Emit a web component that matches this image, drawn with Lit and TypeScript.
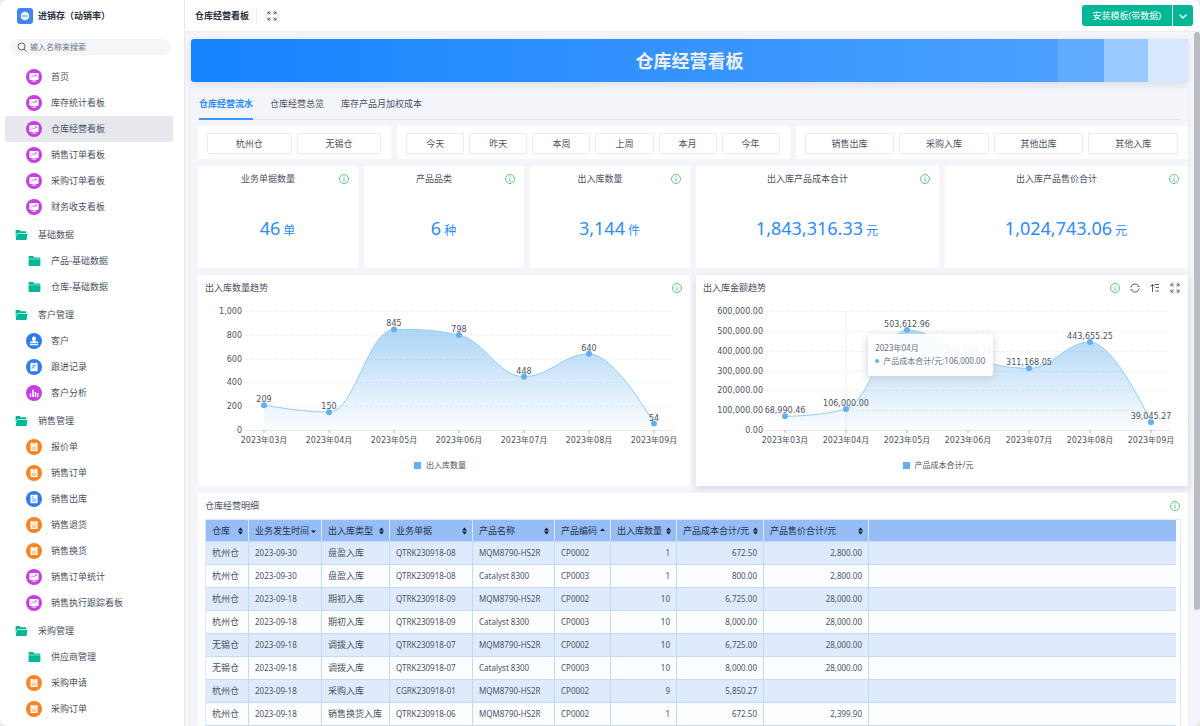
import { LitElement, html, svg, css, nothing } from "lit";
import { customElement, property } from "lit/decorators.js";
import { classMap } from "lit/directives/class-map.js";

type IconName =
  | "board" | "person" | "note" | "bars" | "form" | "doc" | "open" | "folder";

interface NavItem { label: string; icon: IconName; active?: boolean; }
interface NavGroup { label?: string; items: NavItem[]; }

const NAV: NavGroup[] = [
  {
    items: [
      { label: "首页", icon: "board" },
      { label: "库存统计看板", icon: "board" },
      { label: "仓库经营看板", icon: "board", active: true },
      { label: "销售订单看板", icon: "board" },
      { label: "采购订单看板", icon: "board" },
      { label: "财务收支看板", icon: "board" },
    ],
  },
  {
    label: "基础数据",
    items: [
      { label: "产品-基础数据", icon: "folder" },
      { label: "仓库-基础数据", icon: "folder" },
    ],
  },
  {
    label: "客户管理",
    items: [
      { label: "客户", icon: "person" },
      { label: "跟进记录", icon: "note" },
      { label: "客户分析", icon: "bars" },
    ],
  },
  {
    label: "销售管理",
    items: [
      { label: "报价单", icon: "form" },
      { label: "销售订单", icon: "form" },
      { label: "销售出库", icon: "doc" },
      { label: "销售退货", icon: "form" },
      { label: "销售换货", icon: "form" },
      { label: "销售订单统计", icon: "board" },
      { label: "销售执行跟踪看板", icon: "board" },
    ],
  },
  {
    label: "采购管理",
    items: [
      { label: "供应商管理", icon: "folder" },
      { label: "采购申请", icon: "form" },
      { label: "采购订单", icon: "form" },
    ],
  },
];

const FILTERS = [
  ["杭州仓", "无锡仓"],
  ["今天", "昨天", "本周", "上周", "本月", "今年"],
  ["销售出库", "采购入库", "其他出库", "其他入库"],
];

const KPIS = [
  [
    { title: "业务单据数量", value: "46", unit: "单" },
    { title: "产品品类", value: "6", unit: "种" },
    { title: "出入库数量", value: "3,144", unit: "件" },
  ],
  [
    { title: "出入库产品成本合计", value: "1,843,316.33", unit: "元" },
    { title: "出入库产品售价合计", value: "1,024,743.06", unit: "元" },
  ],
];

const COLUMNS = [
  { label: "仓库", sort: "both", cls: "c-house" },
  { label: "业务发生时间", sort: "down", cls: "c-date" },
  { label: "出入库类型", sort: "both", cls: "c-type" },
  { label: "业务单据", sort: "both", cls: "c-bill" },
  { label: "产品名称", sort: "both", cls: "c-name" },
  { label: "产品编码", sort: "up", cls: "c-code" },
  { label: "出入库数量", sort: "both", cls: "c-qty" },
  { label: "产品成本合计/元", sort: "both", cls: "c-cost" },
  { label: "产品售价合计/元", sort: "both", cls: "c-price" },
];

const ROWS = [
  ["杭州仓", "2023-09-30", "盘盈入库", "QTRK230918-08", "MQM8790-HS2R", "CP0002", "1", "672.50", "2,800.00"],
  ["杭州仓", "2023-09-30", "盘盈入库", "QTRK230918-08", "Catalyst 8300", "CP0003", "1", "800.00", "2,800.00"],
  ["杭州仓", "2023-09-18", "期初入库", "QTRK230918-09", "MQM8790-HS2R", "CP0002", "10", "6,725.00", "28,000.00"],
  ["杭州仓", "2023-09-18", "期初入库", "QTRK230918-09", "Catalyst 8300", "CP0003", "10", "8,000.00", "28,000.00"],
  ["无锡仓", "2023-09-18", "调拨入库", "QTRK230918-07", "MQM8790-HS2R", "CP0002", "10", "6,725.00", "28,000.00"],
  ["无锡仓", "2023-09-18", "调拨入库", "QTRK230918-07", "Catalyst 8300", "CP0003", "10", "8,000.00", "28,000.00"],
  ["杭州仓", "2023-09-18", "采购入库", "CGRK230918-01", "MQM8790-HS2R", "CP0002", "9", "5,850.27", ""],
  ["杭州仓", "2023-09-18", "销售换货入库", "QTRK230918-06", "MQM8790-HS2R", "CP0002", "1", "672.50", "2,399.90"],
];

const MONTHS = ["2023年03月", "2023年04月", "2023年05月", "2023年06月", "2023年07月", "2023年08月", "2023年09月"];

const disc = (fill: string, body: unknown) => html`<svg class="disc" viewBox="0 0 16 16" aria-hidden="true">
  <circle cx="8" cy="8" r="8" fill=${fill}></circle>${body}</svg>`;

function navIcon(name: IconName) {
  switch (name) {
    case "board":
      return disc("#c63fe0", svg`<path fill="#fff" d="M4.3 3.9h7.4a.9.9 0 0 1 .9.9v5.2a.9.9 0 0 1-.9.9H8.6v.8h2v.8H5.4v-.8h2v-.8H4.3a.9.9 0 0 1-.9-.9V4.800a.9.9 0 0 1 .9-.9z"/><path d="M5.300 8.300l1.500-1.400 1.300.9 2-1.900M8.800 5.700h1.500v1.400" fill="none" stroke="#c63fe0" stroke-width=".7"/>`);
    case "person":
      return disc("#2f7cee", svg`<path fill="#fff" d="M8 3.500a2.100 2.100 0 0 1 1.300 3.700v1.200h1.900a.9.9 0 0 1 .9.900v1H3.900v-1a.9.9 0 0 1 .9-.9h1.900V7.200A2.100 2.100 0 0 1 8 3.500zM3.900 11.100h8.200v1.100H3.900z"/>`);
    case "note":
      return disc("#2f7cee", svg`<path fill="#fff" d="M4.400 4.200h1V3.500h1.200v.7h2.800v-.7h1.200v.7h1v8H4.400z"/><path d="M5.900 6.800h4.200M5.900 8.800h2.600" stroke="#2f7cee" stroke-width=".9"/>`);
    case "bars":
      return disc("#c63fe0", svg`<path d="M4.500 12V8.500M7 12V4.700M9.400 12V7M11.700 12V8.200" stroke="#fff" stroke-width="1.500"/>`);
    case "form":
      return disc("#fb8420", svg`<path fill="#fff" d="M4.500 3.900h7v8.200h-7z"/><path d="M6.600 4.800h2.800M8 6.200v3.300M6.500 8.100v1.700M9.500 8.100v1.700M5.900 10.300h4.200" stroke="#fb8420" stroke-width=".6"/>`);
    case "doc":
      return disc("#2f7cee", svg`<path fill="#fff" d="M4.400 3.800h7.200v8.400H4.400z"/><path d="M5.800 5.900h2M5.800 8h4.400M5.800 10h4.400" stroke="#2f7cee" stroke-width=".7"/>`);
    case "folder":
      return html`<svg class="folder sub" viewBox="0 0 13 11" aria-hidden="true"><path fill="#02b795" d="M0 .9Q0 0 .9 0h4l1.500 1.600h5.700q.9 0 .9.900V3H0zM0 3.600h13V10q0 1-.9 1H.9Q0 11 0 10z"/></svg>`;
    default:
      return html`<svg class="folder" viewBox="0 0 13 11" aria-hidden="true"><path fill="#02b795" d="M0 .9Q0 0 .9 0h3.600l1.300 1.500h5q.9 0 .9.900v.9H2.400L.5 5.300 0 7z"/><path fill="#02b795" d="M2.600 4.100H13l-.8 6q-.1.900-1 .900H1Q0 11 .2 10l.9-4.700Q1.400 4.100 2.600 4.100z"/></svg>`;
  }
}

const infoIcon = html`<svg class="ic info" viewBox="0 0 12 12" role="img" aria-label="说明">
  <circle cx="6" cy="6" r="4.500" fill="none" stroke="#58cb7a" stroke-width="1"></circle>
  <path d="M6 3.300v1.100M6 5.200v3.600" stroke="#58cb7a" stroke-width="1"></path></svg>`;

const expandIcon = html`<svg class="ic" viewBox="0 0 12 12" aria-hidden="true">
  <path d="M2 4.500V2h2.500M7.500 2H10v2.500M10 7.500V10H7.500M4.500 10H2V7.500M2.200 2.200l2.300 2.300M9.800 2.200L7.500 4.500M9.800 9.800L7.500 7.500M2.200 9.800l2.300-2.300" fill="none" stroke="#565e6c" stroke-width="1"></path></svg>`;

/** Area chart with a smoothed line on a 492 x 150 canvas. */
@customElement("trend-chart")
export class TrendChart extends LitElement {
  @property({ attribute: false }) values: number[] = [];
  @property({ attribute: false }) ticks: number[] = [];
  @property({ type: Number }) decimals = 0;
  @property({ type: Number }) left = 47;
  @property({ type: Number }) first = 66;
  @property({ type: Number }) step = 65;
  @property({ type: Number }) pointer = -1;

  static styles = css`
    :host { display: block; }
    svg { display: block; width: 100%; overflow: visible; }
    text { font: 8px "DejaVu Sans", "Noto Sans CJK SC", sans-serif; fill: #4b5363; }
    .end { text-anchor: end; }
    .mid { text-anchor: middle; }
    .grid { stroke: #f0f1f4; stroke-dasharray: 3 2; }
    .axis { stroke: #e4e6ea; }
    .pointer { stroke: #eceef1; }
    .tick { stroke: #a9afb9; }
    .line { fill: none; stroke: #93cbf5; stroke-width: 1; }
    .dot { fill: #63b0ee; }
  `;

  private fmt(n: number) {
    return n.toLocaleString("en-US", {
      minimumFractionDigits: this.decimals,
      maximumFractionDigits: this.decimals,
    });
  }

  /** Cubic path whose handles never overshoot the neighbouring values. */
  private curve(p: number[][]) {
    const clamp = (v: number, a: number, b: number) =>
      Math.min(Math.max(v, Math.min(a, b)), Math.max(a, b));
    const reach = 0.4;
    let [cx, cy] = p[0];
    let d = `M${p[0][0]} ${p[0][1]}`;
    for (let i = 1; i < p.length; i++) {
      const [x, y] = p[i];
      let bx = x, by = y, nx = x, ny = y;
      if (i < p.length - 1) {
        const py = p[i - 1][1];
        const [qx, qy] = p[i + 1];
        const rise = (qy - py) / 2;
        ny = clamp(y + rise * reach, qy, y);
        by = clamp(2 * y - ny, py, y);
        ny = 2 * y - by;
        nx = x + (qx - x) * reach;
        bx = 2 * x - nx;
      }
      d += `C${cx} ${cy} ${bx} ${by} ${x} ${y}`;
      cx = nx;
      cy = ny;
    }
    return d;
  }

  render() {
    const top = 12, base = 131, right = 475;
    const max = this.ticks[this.ticks.length - 1] || 1;
    const y = (v: number) => base - ((base - top) * v) / max;
    const pts = this.values.map((v, i) => [this.first + this.step * i, y(v)]);
    if (!pts.length) return nothing;
    const d = this.curve(pts);
    const lastX = pts[pts.length - 1][0];
    return html`<svg viewBox="0 0 492 150" role="img">
      <defs><linearGradient id="fade" x1="0" y1="0" x2="0" y2="1">
        <stop offset="0" stop-color="#63b0ee" stop-opacity=".52"></stop>
        <stop offset="1" stop-color="#63b0ee" stop-opacity=".02"></stop>
      </linearGradient></defs>
      ${this.ticks.map((t) => svg`
        <line class=${t ? "grid" : "axis"} x1=${this.left} x2=${right} y1=${Math.round(y(t)) + 0.5} y2=${Math.round(y(t)) + 0.5} />
        <text class="end" x=${this.left - 3} y=${y(t) + 3}>${this.fmt(t)}</text>`)}
      ${this.pointer >= 0 ? svg`<line class="pointer" x1=${pts[this.pointer][0]} x2=${pts[this.pointer][0]} y1=${top} y2=${base} />` : nothing}
      <path d="${d}L${lastX} ${base}L${this.first} ${base}Z" fill="url(#fade)"></path>
      <path class="line" d=${d}></path>
      ${pts.map(([px, py], i) => svg`
        <line class="tick" x1=${px} x2=${px} y1=${base} y2=${base + 3} />
        <text class="mid" x=${px} y=${base + 13}>${MONTHS[i]}</text>
        <circle class="dot" cx=${px} cy=${py} r="3" />
        <text class="mid" x=${px} y=${py - 3}>${this.fmt(this.values[i])}</text>`)}
    </svg>`;
  }
}

@customElement("app-root")
export class AppRoot extends LitElement {
  static styles = css`
    :host {
      display: block;
      height: 100vh;
      overflow: hidden;
      background: #e9eaec;
      font: 9px/14px "Noto Sans", "Noto Sans CJK SC", sans-serif;
      color: #4b5363;
    }
    * { box-sizing: border-box; }
    ul { list-style: none; margin: 0; padding: 0; }
    h1, h2, h3, p { margin: 0; font-size: 9px; font-weight: 400; }
    a { color: inherit; text-decoration: none; }
    button { font: inherit; color: inherit; cursor: pointer; padding: 0; }
    .ic { display: block; width: 12px; height: 12px; flex: none; }

    .window { display: flex; height: 100%; border-radius: 8px; overflow: hidden; background: #f4f5fa; }

    .side { width: 185px; flex: none; background: #fff; border-right: 1px solid #e6e8ee; overflow: hidden; }
    .brand { display: flex; align-items: center; gap: 5px; height: 32px; padding-left: 17px; }
    .brand h1 { font-weight: 700; color: #2a3140; }
    .logo { width: 16px; height: 16px; display: block; }
    .search { display: flex; align-items: center; gap: 2px; height: 16px; margin: 7px 13px 9px 10px; padding-left: 6px; border-radius: 8px; background: #f4f6f9; }
    .search input { flex: 1; min-width: 0; border: 0; padding: 0; background: none; outline: none; font: inherit; font-size: 8px; color: inherit; }
    .search input::placeholder { color: #6b7280; opacity: 1; }
    .groups { display: flex; flex-direction: column; gap: 2px; }
    .entry { display: flex; align-items: center; height: 26px; margin: 0 11px 0 5px; border-radius: 2px; padding-left: 10px; gap: 10px; color: #4b5363; }
    .groups ul { display: block; }
    .entry.child { padding-left: 21px; gap: 9px; }
    .entry.active { background: #e6e8ed; }
    .disc { width: 16px; height: 16px; flex: none; }
    .folder { width: 13px; height: 10px; flex: none; }
    .folder.sub { margin: 0 1px 0 2px; }

    .main { flex: 1; min-width: 0; display: flex; flex-direction: column; }
    .top { display: flex; align-items: center; height: 32px; flex: none; padding: 0 7px 0 10px; background: #fff; border-bottom: 1px solid #eceef3; }
    .top h2 { font-weight: 700; color: #2a3140; padding-right: 7px; margin-right: 9px; border-right: 1px solid #e8eaee; }
    .top .plain { border: 0; background: none; }
    .install { display: flex; gap: 1px; margin-left: auto; }
    .install button { height: 21px; border: 0; background: #02b795; color: #fff; display: grid; place-items: center; }
    .install .go { padding: 0 11px; border-radius: 3px 0 0 3px; }
    .install .more { width: 20px; border-radius: 0 3px 3px 0; }

    .scroll { flex: 1; min-height: 0; display: flex; overflow: hidden; }
    .page { flex: 1; min-width: 0; padding: 7px 6px 0; }
    .thumb { width: 6px; height: 578px; flex: none; border-radius: 3px; background: #b9bdc3; }
    .banner { display: grid; grid-template-columns: 1fr 46px 44px 40px; height: 43px; border-radius: 3px; overflow: hidden; background: linear-gradient(90deg, #1683ff, #53a4ff); box-shadow: 0 2px 6px #d8dcec; }
    .banner h2 { grid-row: 1; grid-column: 1 / -1; place-self: center; font-size: 18px; line-height: 26px; font-weight: 700; color: #eceef2; }
    .shade { grid-row: 1; }
    .s1 { grid-column: 2; background: #61abff; }
    .s2 { grid-column: 3; background: #99caff; }
    .s3 { grid-column: 4; background: #d8e9ff; }
    .panel { margin-top: 6px; padding: 0 0 0 7px; box-shadow: 0 0 5px #e6e8f1; }
    .tabs { display: flex; gap: 17px; margin: 0 8px 6px 1px; border-bottom: 1px solid #e3e5ea; }
    .tabs a { height: 32px; padding-top: 9px; margin-bottom: -1px; }
    .tabs a.on { color: #2a8cff; font-weight: 700; border-bottom: 2px solid #3d96ff; }
    .stack { display: grid; gap: 7px; }
    .filters { display: grid; grid-template-columns: 33fr 67fr 67fr; gap: 6px; }
    .filter { display: flex; gap: 5px; background: #fff; padding: 7px 10px 5px 9px; }
    .filter button { flex: 1; height: 21px; border: 1px solid #e9ebee; border-radius: 2px; background: #fff; }
    .halves { display: grid; grid-template-columns: 1fr 1fr; gap: 6px; }
    .kpis { display: grid; grid-auto-flow: column; grid-auto-columns: 1fr; gap: 6px; }
    .kpi { height: 102px; background: #fff; padding: 6px 8px 6px 7px; text-align: center; }
    .kpi header { display: grid; grid-template-columns: 1fr 12px; gap: 7px; align-items: center; }
    .kpi p { margin-top: 28px; font-size: 12px; line-height: 28px; color: #2a8cff; }
    .kpi .num { font-size: 18px; font-weight: 400; }
    .card { background: #fff; padding: 6px 7px 14px; position: relative; }
    .card.raised { box-shadow: 0 3px 8px #d6d8e6; }
    .card header { display: flex; align-items: center; gap: 8px; }
    .card header h3 { margin-right: auto; }
    .card header .plain { border: 0; background: none; }
    .card trend-chart { margin: 4px -7px 0; }
    .legend { display: flex; justify-content: center; align-items: center; gap: 5px; font-size: 8px; margin-top: 9px; padding-right: 8px; }
    .swatch { width: 7px; height: 7px; background: #63b0ee; }
    .tip { position: absolute; left: 35%; top: 59px; width: 125px; height: 42px; padding: 7px 7px 0; border-radius: 2px; background: rgba(255, 255, 255, 0.93); box-shadow: 0 2px 8px #c9ccd6; font-size: 8px; line-height: 13px; color: #6b7280; white-space: nowrap; }
    .tip p { font-size: 8px; display: flex; align-items: center; gap: 4px; }
    .tip i { width: 4px; height: 4px; border-radius: 50%; background: #63b0ee; }

    .detail { padding-bottom: 0; }
    .sheet { margin-top: 6px; border: 1px solid #deebff; border-bottom: 0; padding-right: 4px; }
    table { width: 100%; table-layout: fixed; border-collapse: separate; border-spacing: 0; }
    th, td { height: 23px; padding: 0 6px; border-right: 1px solid #bfd8fb; border-bottom: 1px solid #c5dbfb; text-align: left; font-weight: 400; white-space: nowrap; overflow: hidden; }
    th { height: 22px; background: #97bdf6; color: #26334d; border-right-color: #dbe9ff; border-bottom-color: #c5dbfb; }
    tr > :last-child { border-right: 0; }
    tbody tr:nth-child(odd) { background: #dfebfc; }
    tbody tr:nth-child(even) { background: #fbfdff; }
    .latin { font-size: 8px; }
    .num-cell { text-align: right; }
    .head { display: flex; align-items: center; justify-content: space-between; margin-right: -2px; }
    .sort { width: 7px; height: 8px; flex: none; }
    .c-house { width: 43px; } .c-date { width: 73px; } .c-type { width: 68px; }
    .c-bill { width: 83px; } .c-name { width: 82px; } .c-code { width: 56px; }
    .c-qty { width: 66px; } .c-cost { width: 87px; } .c-price { width: 105px; }
  `;

  private entry(item: NavItem) {
    return html`<li><a href="#" class=${classMap({ entry: true, child: true, active: !!item.active })}>${navIcon(item.icon)}<span>${item.label}</span></a></li>`;
  }

  private sidebar() {
    return html`<aside class="side">
      <div class="brand">
        <svg class="logo" viewBox="0 0 16 16" aria-hidden="true"><rect width="16" height="16" rx="3" fill="#3f86ee"></rect><circle cx="8" cy="8" r="4.300" fill="#eef5ff"></circle><path d="M5 8h6M6 7v2M8 7v2M10 7v2" stroke="#6ea5f3" stroke-width=".8"></path></svg>
        <h1>进销存（动销率）</h1>
      </div>
      <label class="search">
        <svg class="ic" viewBox="0 0 12 12" aria-hidden="true"><circle cx="5.500" cy="5.500" r="3.500" fill="none" stroke="#5b6372"></circle><path d="M8 8l2.500 2.500" stroke="#5b6372"></path></svg>
        <input type="search" placeholder="输入名称来搜索" aria-label="输入名称来搜索" />
      </label>
      <nav><ul class="groups">
        ${NAV.map((g) => html`<li>
          ${g.label ? html`<a href="#" class="entry">${navIcon("open")}<span>${g.label}</span></a>` : nothing}
          <ul>${g.items.map((i) => this.entry(i))}</ul>
        </li>`)}
      </ul></nav>
    </aside>`;
  }

  private sortIcon(kind: string) {
    return html`<svg class="sort" viewBox="0 0 7 8" aria-hidden="true">
      ${kind === "both" ? svg`<path fill="#111827" d="M3.500.500L6 3.400H1zM3.500 7.500L1 4.600h5z"/>` : nothing}
      ${kind === "down" ? svg`<path fill="#111827" d="M1 3.500h5L3.500 6z"/>` : nothing}
      ${kind === "up" ? svg`<path fill="#111827" d="M1 4h5L3.500 1.500z"/>` : nothing}
    </svg>`;
  }

  private table() {
    return html`<div class="sheet"><table>
      <thead><tr>
        ${COLUMNS.map((c) => html`<th class=${c.cls} scope="col"><div class="head"><span>${c.label}</span>${this.sortIcon(c.sort)}</div></th>`)}
        <th></th>
      </tr></thead>
      <tbody>
        ${ROWS.map((r) => html`<tr>
          ${r.map((v, i) => html`<td class=${classMap({ latin: i !== 0 && i !== 2, "num-cell": i > 5 })}>${v}</td>`)}
          <td></td>
        </tr>`)}
      </tbody>
    </table></div>`;
  }

  render() {
    return html`<div class="window">
      ${this.sidebar()}
      <main class="main">
        <div class="top">
          <h2>仓库经营看板</h2>
          <button class="plain" aria-label="全屏">${expandIcon}</button>
          <div class="install">
            <button class="go">安装模板(带数据)</button>
            <button class="more" aria-label="更多"><svg class="ic" viewBox="0 0 12 12"><path d="M2.500 4.500L6 8l3.500-3.500" fill="none" stroke="#fff" stroke-width="1.300"></path></svg></button>
          </div>
        </div>
        <div class="scroll">
          <div class="page">
            <div class="banner">
              <span class="shade s1"></span><span class="shade s2"></span><span class="shade s3"></span>
              <h2>仓库经营看板</h2>
            </div>
            <div class="panel">
              <nav class="tabs"><a href="#" class="on">仓库经营流水</a><a href="#">仓库经营总览</a><a href="#">库存产品月加权成本</a></nav>
              <div class="stack">
                <div class="filters">
                  ${FILTERS.map((f) => html`<div class="filter">${f.map((b) => html`<button>${b}</button>`)}</div>`)}
                </div>
                <div class="halves">
                  ${KPIS.map((half) => html`<div class="kpis">${half.map((k) => html`<section class="kpi">
                    <header><h3>${k.title}</h3>${infoIcon}</header>
                    <p><span class="num">${k.value}</span> ${k.unit}</p>
                  </section>`)}</div>`)}
                </div>
                <div class="halves">
                  <section class="card">
                    <header><h3>出入库数量趋势</h3>${infoIcon}</header>
                    <trend-chart .values=${[209, 150, 845, 798, 448, 640, 54]} .ticks=${[0, 200, 400, 600, 800, 1000]}></trend-chart>
                    <div class="legend"><span class="swatch"></span>出入库数量</div>
                  </section>
                  <section class="card raised">
                    <header><h3>出入库金额趋势</h3>${infoIcon}
                      <button class="plain" aria-label="刷新"><svg class="ic" viewBox="0 0 12 12"><path d="M1.900 5.500A4.100 4.100 0 0 1 9.500 3.900M10.100 6.500A4.100 4.100 0 0 1 2.500 8.100M8.300 4.300h2.200M1.500 7.700h2.200" fill="none" stroke="#565e6c"></path></svg></button>
                      <button class="plain" aria-label="排序"><svg class="ic" viewBox="0 0 12 12"><path d="M3.500 10V2.500M1.500 4.500l2-2 2 2M5.500 2.500H10M6.500 5.500H10M6.500 9H10" fill="none" stroke="#565e6c"></path></svg></button>
                      <button class="plain" aria-label="放大">${expandIcon}</button>
                    </header>
                    <trend-chart .values=${[68990.46, 106000, 503612.96, 370844.34, 311168.05, 443655.25, 39045.27]} .ticks=${[0, 100000, 200000, 300000, 400000, 500000, 600000]} .decimals=${2} .left=${70} .first=${89} .step=${61} .pointer=${1}></trend-chart>
                    <div class="tip"><p>2023年04月</p><p><i></i>产品成本合计/元:106,000.00</p></div>
                    <div class="legend"><span class="swatch"></span>产品成本合计/元</div>
                  </section>
                </div>
                <section class="card detail">
                  <header><h3>仓库经营明细</h3>${infoIcon}</header>
                  ${this.table()}
                </section>
              </div>
            </div>
          </div>
          <div class="thumb"></div>
        </div>
      </main>
    </div>`;
  }
}
